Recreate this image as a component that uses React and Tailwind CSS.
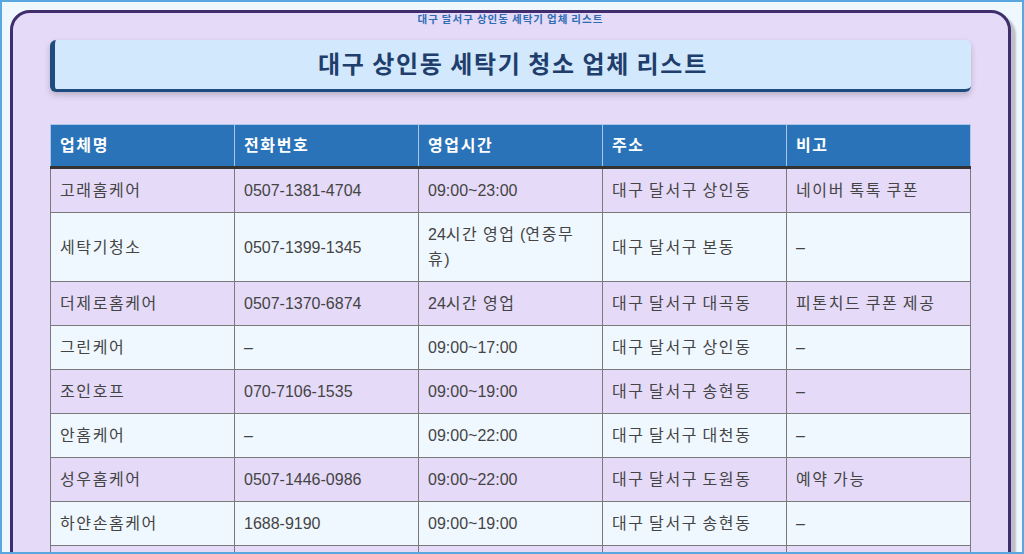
import React from "react";

const rows = [
  ["고래홈케어", "0507-1381-4704", "09:00~23:00", "대구 달서구 상인동", "네이버 톡톡 쿠폰"],
  ["세탁기청소", "0507-1399-1345", "24시간 영업 (연중무휴)", "대구 달서구 본동", "–"],
  ["더제로홈케어", "0507-1370-6874", "24시간 영업", "대구 달서구 대곡동", "피톤치드 쿠폰 제공"],
  ["그린케어", "–", "09:00~17:00", "대구 달서구 상인동", "–"],
  ["조인호프", "070-7106-1535", "09:00~19:00", "대구 달서구 송현동", "–"],
  ["안홈케어", "–", "09:00~22:00", "대구 달서구 대천동", "–"],
  ["성우홈케어", "0507-1446-0986", "09:00~22:00", "대구 달서구 도원동", "예약 가능"],
  ["하얀손홈케어", "1688-9190", "09:00~19:00", "대구 달서구 송현동", "–"],
  ["", "", "", "", ""],
];

const heads = ["업체명", "전화번호", "영업시간", "주소", "비고"];

function K({ text, cls }) {
  const parts = text.split(/([\uAC00-\uD7A3]+)/);
  return (
    <>
      {parts.map((p, i) =>
        /[\uAC00-\uD7A3]/.test(p) ? (
          <span key={i} className={cls}>
            {p}
          </span>
        ) : (
          <React.Fragment key={i}>{p}</React.Fragment>
        )
      )}
    </>
  );
}

export default function App() {
  return (
    <div
      className="h-[554px] w-[1024px] overflow-hidden border-2 border-[#5aa7e0] bg-[#f0f8ff] pl-[8px] pr-[11px] pt-[8px]"
      style={{ fontFamily: '"Liberation Sans", "Noto Sans CJK KR", sans-serif' }}
    >
      <div className="h-[600px] rounded-[20px] border-[3px] border-[#3f2d6e] bg-[#e5daf8] px-[37px] shadow-[5px_5px_2px_rgba(0,0,0,0.22)]">
        <div className="h-[27px] text-center text-[10.5px] font-bold leading-[12px] text-[#2e6db4]">
          <K text="대구 달서구 상인동 세탁기 업체 리스트" cls="tracking-[0.1em]" />
        </div>
        <div className="flex h-[52px] items-center justify-center rounded-[6px] border-b-[3px] border-l-[5px] border-[#1f4b7f] bg-[#d2e8fc] shadow-[0_3px_6px_rgba(0,0,0,0.2)]">
          <h1 className="text-[24px] font-bold leading-[36px] text-[#1f3e6c]">
            <K text="대구 상인동 세탁기 청소 업체 리스트" cls="tracking-[0.07em]" />
          </h1>
        </div>
        <table className="mt-[32px] w-full table-fixed border-collapse text-[16px] leading-[25px]">
          <thead>
            <tr className="bg-[#2a73b8]">
              {heads.map((h) => (
                <th
                  key={h}
                  className="h-[43px] border border-b-[3px] border-[#a9c8e8] border-b-[#333333] pl-[9px] pr-[10px] text-left font-bold text-white"
                >
                  <K text={h} cls="tracking-[0.1em]" />
                </th>
              ))}
            </tr>
          </thead>
          <tbody>
            {rows.map((r, i) => (
              <tr key={i} className={i % 2 === 0 ? "bg-[#e5daf8]" : "bg-[#f0f8ff]"}>
                {r.map((c, j) => (
                  <td
                    key={j}
                    className="h-[44px] border border-[#7a7a7a] py-[9px] pl-[9px] pr-[10px] text-[#444444]"
                  >
                    <K text={c} cls="tracking-[0.1em]" />
                  </td>
                ))}
              </tr>
            ))}
          </tbody>
        </table>
      </div>
    </div>
  );
}
